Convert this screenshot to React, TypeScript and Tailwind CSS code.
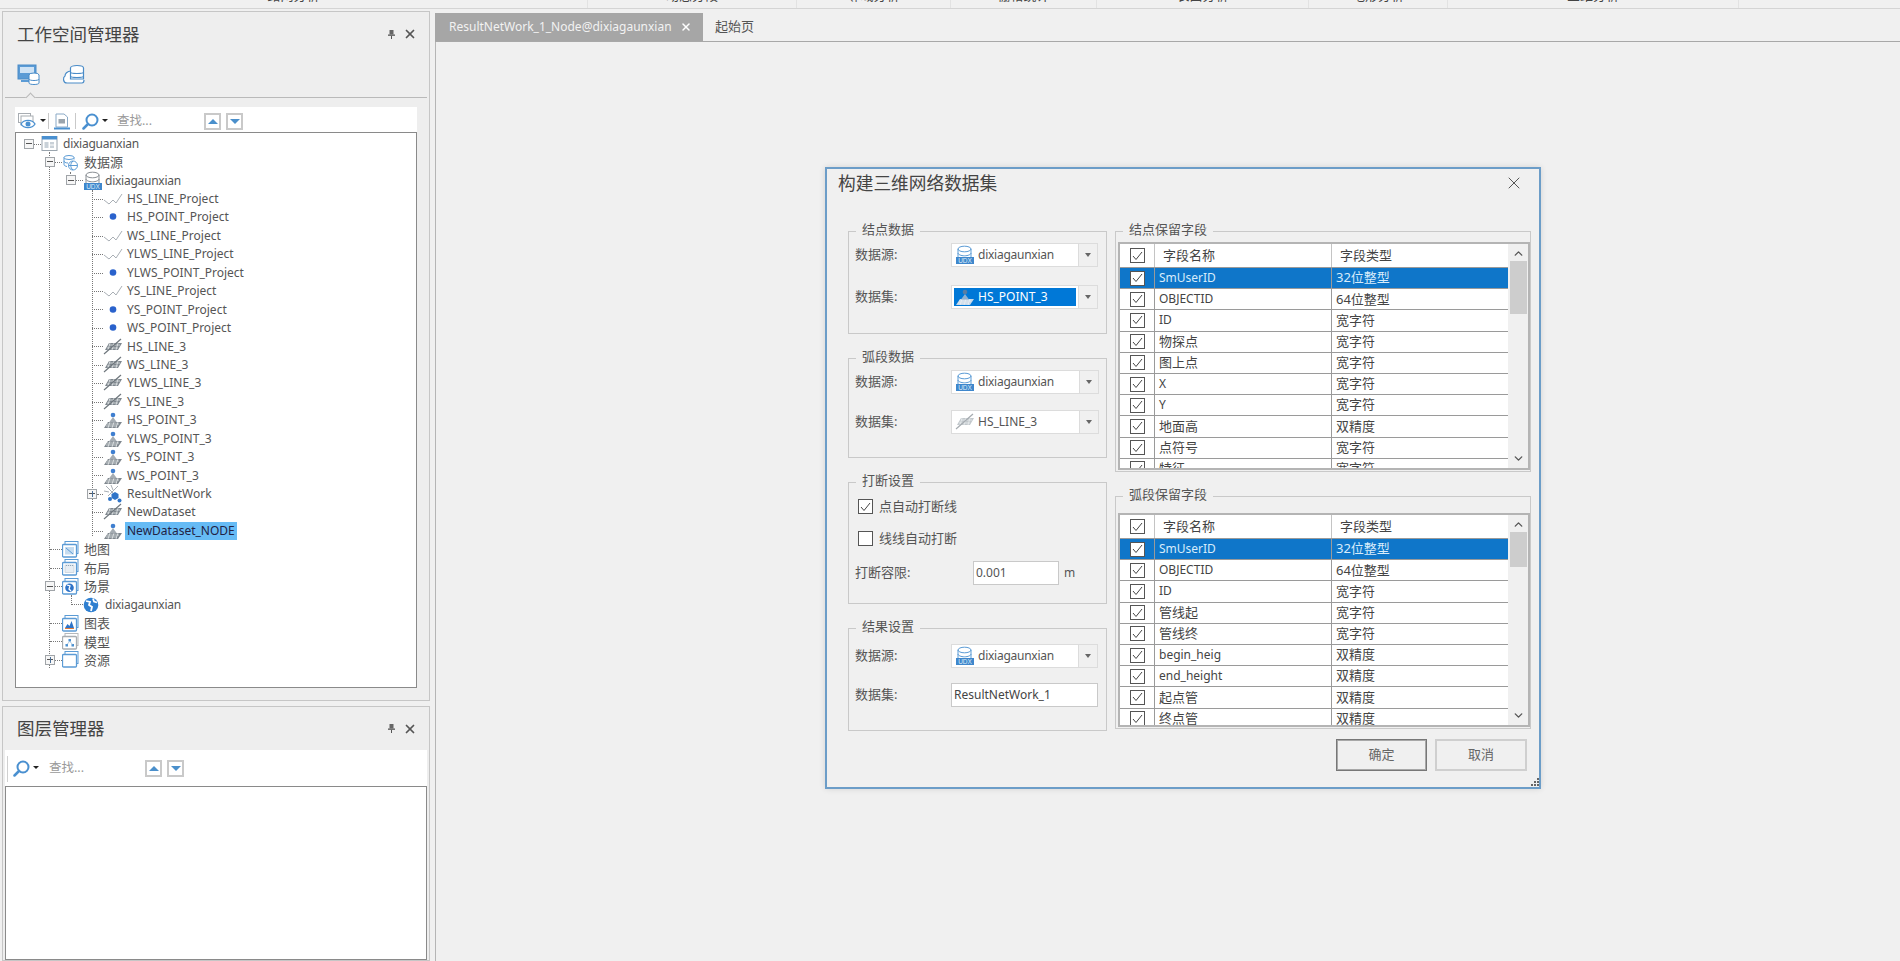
import { FC, ReactNode } from "react";
import { ChevronDown, ChevronUp, X } from "lucide-react";

const ribbonGroups = [
  { label: "路网分析", width: "w-[588px]" },
  { label: "动态分段", width: "w-[209px]" },
  { label: "邻域分析", width: "w-[154px]" },
  { label: "栅格统计", width: "w-[146px]" },
  { label: "表面分析", width: "w-[212px]" },
  { label: "地形分析", width: "w-[139px]" },
  { label: "三维分析", width: "w-[291px]" },
];

// latin labels run a little smaller than the cjk ones in this ui
const Txt: FC<{ children: string; className?: string }> = ({ children, className = "" }) => {
  const cjk = /[\u4e00-\u9fff]/.test(children);
  const size = cjk ? "text-[13px]" : children.startsWith("dixia") ? "text-[12px] tracking-[-0.25px]" : "text-[12px]";
  return <span className={`whitespace-nowrap ${size} ${className}`}>{children}</span>;
};

// ---- tree icons ----
const WorkspaceIcon = () => (
  <svg width="17" height="17" viewBox="0 0 17 17">
    <rect x="1" y="1.5" width="15" height="14" fill="#fff" stroke="#9aa4ad" />
    <rect x="1" y="1" width="15" height="3.5" fill="#4a90d0" />
    <rect x="3.5" y="7" width="4" height="6" fill="#c9d1d8" />
    <rect x="9" y="7" width="4" height="2.5" fill="#c9d1d8" />
    <rect x="9" y="10.5" width="4" height="2.5" fill="#c9d1d8" />
  </svg>
);

const SourcesIcon = () => (
  <svg width="17" height="17" viewBox="0 0 17 17" fill="none" stroke="#5b9bd5" strokeWidth="1">
    <ellipse cx="7" cy="3.5" rx="5" ry="2" />
    <path d="M2 3.5v7c0 1 1.5 1.8 3 2M12 3.5v2M2 7c0 1 1.5 2 4 2" />
    <circle cx="11" cy="11.5" r="4.5" fill="#fff" />
    <path d="M6.500 11.500h9M11 7c-3 2.500-3 6.500 0 9" />
  </svg>
);

const UdbIcon: FC<{ dim?: boolean }> = ({ dim }) => (
  <svg width="20" height="20" viewBox="0 0 20 20">
    <ellipse cx="9.500" cy="4" rx="6.500" ry="2.800" fill="#fff" stroke={dim ? "#5b9bd5" : "#8a8f94"} />
    <path d="M3 4v10M16 4v10M3 8c0 1.500 3 2.800 6.500 2.800S16 9.500 16 8" fill="#fff" stroke={dim ? "#5b9bd5" : "#8a8f94"} />
    <rect x="1" y="12" width="18" height="7" fill="#3f87cc" />
    <text x="10" y="18" textAnchor="middle" fontSize="6.500" fill="#dcecf9" fontFamily="Liberation Sans, sans-serif">
      UDX
    </text>
  </svg>
);

const LineIcon = () => (
  <svg width="20" height="14" viewBox="0 0 20 14" fill="none" stroke="#a9afb5" strokeWidth="1">
    <path d="M1 8l5 4 4-4 3 3 6-9" />
  </svg>
);

const PointIcon = () => (
  <svg width="20" height="14" viewBox="0 0 20 14">
    <circle cx="10" cy="6.500" r="3.300" fill="#2a62cc" />
  </svg>
);

const Line3dIcon: FC<{ dim?: boolean }> = ({ dim }) => (
  <svg width="20" height="20" viewBox="0 0 20 20" fill="none">
    <path d="M6 6h13l-4 7H2z" fill={dim ? "#c2c8cc" : "#7f878e"} />
    <path d="M6 8h11M4 11h11M7 6l-2 7M11 6l-2 7M15 6l-2 7" stroke="#eef0f2" strokeWidth="0.700" />
    <path d="M1 17L18 2" stroke={dim ? "#a5abb0" : "#6f777d"} strokeWidth="1.200" />
  </svg>
);

const Point3dIcon: FC<{ selected?: boolean }> = ({ selected }) => (
  <svg width="20" height="20" viewBox="0 0 20 20" fill="none">
    <path d="M5 12h14l-4 6H1z" fill={selected ? "#c7d8e8" : "#7f878e"} />
    <path d="M4 14h12M3 16h11M7 12l-2 6M11 12l-2 6M15 12l-2 6" stroke="#eef0f2" strokeWidth="0.700" />
    <path d="M10 7l-4 5.500h8z" fill={selected ? "#8fb0d0" : "#a5acb2"} />
    <circle cx="10" cy="5" r="2.300" fill={selected ? "#5a7ea3" : "#3f7fd0"} />
  </svg>
);

const NetworkIcon = () => (
  <svg width="20" height="20" viewBox="0 0 20 20" fill="none">
    <path d="M3 2l12 12M15 2L5 12M8 1l2 5M1 7l5 1" stroke="#a9afb5" />
    <path d="M12 8l3.500 2v4L12 16l-3.500-2v-4z" fill="#2f74c8" />
    <circle cx="7" cy="15" r="2" fill="#2f74c8" />
    <circle cx="16.500" cy="16.500" r="2" fill="#2f74c8" />
  </svg>
);

const FolderFrame: FC<{ children?: ReactNode; gray?: boolean }> = ({ children, gray }) => (
  <svg width="17" height="17" viewBox="0 0 17 17" fill="none">
    <rect x="3" y="0.500" width="13" height="12" fill="#fff" stroke={gray ? "#b5b8bb" : "#5b9bd5"} />
    <rect x="0.500" y="3.500" width="14" height="12.500" rx="1" fill="#fff" stroke={gray ? "#a9adb1" : "#5b9bd5"} strokeWidth="1.300" />
    {children}
  </svg>
);

const MapIcon = () => (
  <FolderFrame>
    <rect x="3" y="6" width="9" height="7.500" fill="#c5dcf0" />
    <path d="M4 7l7 6" stroke="#5b9bd5" />
  </FolderFrame>
);
const LayoutIcon = () => (
  <FolderFrame>
    <rect x="3" y="6" width="9" height="7.500" fill="#e6edf3" stroke="#b9c7d3" strokeWidth="0.600" />
    <path d="M4 6.500h7" stroke="#8fa5b8" strokeDasharray="1 1" />
  </FolderFrame>
);
const SceneIcon = () => (
  <FolderFrame>
    <circle cx="7.500" cy="9.700" r="4.300" fill="#2f74c8" />
    <path d="M5 7l3 1-1 3 2 2" stroke="#fff" strokeWidth="1.300" />
  </FolderFrame>
);
const ChartIcon = () => (
  <FolderFrame>
    <path d="M3 13l2.500-4 2 2 2-5 2.500 7z" fill="#2f74c8" />
    <path d="M3 13.500h9" stroke="#e07b39" />
  </FolderFrame>
);
const ModelIcon = () => (
  <FolderFrame gray>
    <rect x="6.500" y="6" width="2.500" height="2.500" fill="#4a90d0" />
    <rect x="3.500" y="11" width="2.500" height="2.500" fill="#4a90d0" />
    <rect x="9.500" y="11" width="2.500" height="2.500" fill="#4a90d0" />
    <path d="M7.500 8.500l-2.500 3M8 8.500l2.500 3" stroke="#8fb3d3" strokeWidth="0.700" />
  </FolderFrame>
);
const GlobeIcon = () => (
  <svg width="16" height="16" viewBox="0 0 16 16">
    <circle cx="8" cy="8" r="7.300" fill="#2f7fd0" />
    <path d="M3 4l4 1-1 3 3 2-1 4M10 1.500l1 3 3 1" fill="none" stroke="#fff" strokeWidth="1.800" />
  </svg>
);

// ---- toolbar icons ----
const Caret = () => <span className="inline-block border-x-[3px] border-t-[3px] border-x-transparent border-t-[#222]" />;

const EyeIcon = () => (
  <svg width="20" height="16" viewBox="0 0 20 16" fill="none">
    <rect x="0.500" y="0.500" width="12" height="9" fill="#fff" stroke="#a8adb2" />
    <rect x="3" y="3" width="12" height="9" fill="#fff" stroke="#a8adb2" />
    <path d="M3 11c3-4.800 11-4.800 14 0-3 4.800-11 4.800-14 0z" fill="#fff" stroke="#4a90d0" strokeWidth="1.400" />
    <circle cx="10" cy="11" r="2.500" fill="#4a90d0" />
  </svg>
);
const DocIcon = () => (
  <svg width="16" height="17" viewBox="0 0 16 17" fill="none">
    <path d="M2 1h8l3.500 3v10H2z" fill="#fff" stroke="#8aa9c6" />
    <rect x="4.500" y="6" width="6.500" height="4.500" fill="#9aa4ad" />
    <path d="M0 15.500h16" stroke="#4a90d0" strokeWidth="2" />
  </svg>
);
const FindIcon = () => (
  <svg width="17" height="17" viewBox="0 0 17 17" fill="none">
    <circle cx="10" cy="7" r="5.500" stroke="#4a90d0" strokeWidth="2" />
    <path d="M6 11l-4.500 4.500" stroke="#4a90d0" strokeWidth="2.500" strokeLinecap="round" />
  </svg>
);
const PinIcon = () => (
  <svg width="7" height="9" viewBox="0 0 7 9" className="mr-[8px]">
    <rect x="1.500" y="0" width="4" height="4.500" fill="#666" />
    <rect x="0" y="4.500" width="7" height="1.300" fill="#555" />
    <rect x="3" y="5.800" width="1" height="3.200" fill="#555" />
  </svg>
);
const ArrowBox: FC<{ up?: boolean }> = ({ up }) => (
  <span className="flex h-[17px] w-[17px] items-center justify-center border-2 border-[#c9c9c9] bg-white">
    <span
      className={
        up
          ? "border-x-[5px] border-b-[5px] border-x-transparent border-b-[#4a8fcb]"
          : "border-x-[5px] border-t-[5px] border-x-transparent border-t-[#4a8fcb]"
      }
    />
  </span>
);

const Expander: FC<{ open?: boolean; className: string }> = ({ open, className }) => (
  <span className={`absolute top-[4px] flex h-[10px] w-[10px] items-center justify-center border border-[#a0a4a8] bg-[#f6f6f6] ${className}`}>
    <span className="absolute h-px w-[6px] bg-[#555]" />
    {!open && <span className="absolute h-[6px] w-px bg-[#4a6f98]" />}
  </span>
);

const HDot: FC<{ className: string }> = ({ className }) => (
  <span className={`absolute top-[9px] h-px border-t border-dotted border-[#777] ${className}`} />
);

const rowIndent = {
  0: "ml-[25px] w-[22px]",
  1: "ml-[46px] w-[22px]",
  2: "ml-[67px] w-[22px]",
  3: "ml-[87px] w-[24px]",
};

type TreeItem = {
  label: string;
  depth: 0 | 1 | 2 | 3;
  icon: ReactNode;
  expander?: ReactNode;
  stub: string;
  selected?: boolean;
};

const leafStub = "left-[76px] w-[11px]";
const d1Stub = "left-[34px] w-[12px]";

const treeItems: TreeItem[] = [
  { label: "dixiaguanxian", depth: 0, icon: <WorkspaceIcon />, expander: <Expander open className="left-[8px]" />, stub: "left-[18px] w-[7px]" },
  { label: "数据源", depth: 1, icon: <SourcesIcon />, expander: <Expander open className="left-[29px]" />, stub: "left-[39px] w-[7px]" },
  { label: "dixiagaunxian", depth: 2, icon: <UdbIcon />, expander: <Expander open className="left-[50px]" />, stub: "left-[60px] w-[7px]" },
  { label: "HS_LINE_Project", depth: 3, icon: <LineIcon />, stub: leafStub },
  { label: "HS_POINT_Project", depth: 3, icon: <PointIcon />, stub: leafStub },
  { label: "WS_LINE_Project", depth: 3, icon: <LineIcon />, stub: leafStub },
  { label: "YLWS_LINE_Project", depth: 3, icon: <LineIcon />, stub: leafStub },
  { label: "YLWS_POINT_Project", depth: 3, icon: <PointIcon />, stub: leafStub },
  { label: "YS_LINE_Project", depth: 3, icon: <LineIcon />, stub: leafStub },
  { label: "YS_POINT_Project", depth: 3, icon: <PointIcon />, stub: leafStub },
  { label: "WS_POINT_Project", depth: 3, icon: <PointIcon />, stub: leafStub },
  { label: "HS_LINE_3", depth: 3, icon: <Line3dIcon />, stub: leafStub },
  { label: "WS_LINE_3", depth: 3, icon: <Line3dIcon />, stub: leafStub },
  { label: "YLWS_LINE_3", depth: 3, icon: <Line3dIcon />, stub: leafStub },
  { label: "YS_LINE_3", depth: 3, icon: <Line3dIcon />, stub: leafStub },
  { label: "HS_POINT_3", depth: 3, icon: <Point3dIcon />, stub: leafStub },
  { label: "YLWS_POINT_3", depth: 3, icon: <Point3dIcon />, stub: leafStub },
  { label: "YS_POINT_3", depth: 3, icon: <Point3dIcon />, stub: leafStub },
  { label: "WS_POINT_3", depth: 3, icon: <Point3dIcon />, stub: leafStub },
  { label: "ResultNetWork", depth: 3, icon: <NetworkIcon />, expander: <Expander className="left-[71px]" />, stub: "left-[81px] w-[6px]" },
  { label: "NewDataset", depth: 3, icon: <Line3dIcon />, stub: leafStub },
  { label: "NewDataset_NODE", depth: 3, icon: <Point3dIcon />, stub: leafStub, selected: true },
  { label: "地图", depth: 1, icon: <MapIcon />, stub: d1Stub },
  { label: "布局", depth: 1, icon: <LayoutIcon />, stub: d1Stub },
  { label: "场景", depth: 1, icon: <SceneIcon />, expander: <Expander open className="left-[29px]" />, stub: "left-[39px] w-[7px]" },
  { label: "dixiagaunxian", depth: 2, icon: <GlobeIcon />, stub: "left-[55px] w-[12px]" },
  { label: "图表", depth: 1, icon: <ChartIcon />, stub: d1Stub },
  { label: "模型", depth: 1, icon: <ModelIcon />, stub: d1Stub },
  { label: "资源", depth: 1, icon: <FolderFrame />, expander: <Expander className="left-[29px]" />, stub: "left-[39px] w-[7px]" },
];

const WorkspaceTree = () => (
  <div className="relative h-full overflow-hidden pt-[1.5px]">
    <span className="absolute left-[33px] top-[19px] h-[516px] border-l border-dotted border-[#777]" />
    <span className="absolute left-[54px] top-[39px] h-[6px] border-l border-dotted border-[#777]" />
    <span className="absolute left-[76px] top-[57px] h-[346px] border-l border-dotted border-[#777]" />
    <span className="absolute left-[55px] top-[462px] h-[10px] border-l border-dotted border-[#777]" />
    {treeItems.map((item, i) => (
      <div key={i} className="relative flex h-[18.45px] items-center">
        {item.expander}
        <HDot className={item.stub} />
        <span className={`flex shrink-0 items-center ${rowIndent[item.depth]}`}>{item.icon}</span>
        <Txt className={`leading-[18px] ${item.selected ? "-ml-[2px] bg-[#66bbf5] px-[2px] text-[#224]" : ""}`}>{item.label}</Txt>
      </div>
    ))}
  </div>
);

const PanelHeader: FC<{ title: string; className: string }> = ({ title, className }) => (
  <div className={`flex items-center pl-[14px] pr-[12px] ${className}`}>
    <span className="flex-1 text-[17.5px] text-[#444]">{title}</span>
    <PinIcon />
    <X size={14} strokeWidth={3} className="text-[#555]" />
  </div>
);

const SearchBits: FC<{ className: string }> = ({ className }) => (
  <>
    <FindIcon />
    <span className="ml-[3px] mt-[-2px] flex"><Caret /></span>
    <span className={`text-[12.5px] text-[#9a9a9a] ${className}`}>查找...</span>
  </>
);

const WorkspacePanel = () => (
  <section className="flex h-[690px] w-[428px] flex-col border border-[#c6c6c6] bg-[#eeeeee]">
    <PanelHeader title="工作空间管理器" className="h-[44px]" />
    <div className="relative mx-[2px] flex h-[42px] items-start gap-[22px] border-b border-[#b9b9b9] pl-[12px] pt-[8px]">
      <svg width="23" height="21" viewBox="0 0 23 21" fill="none">
        <rect x="1" y="1" width="18" height="14" fill="#5b9bd5" stroke="#4a8cc8" />
        <rect x="3" y="3" width="14" height="6" fill="#cfe3f5" />
        <path d="M4 17h12" stroke="#5b9bd5" strokeWidth="2" />
        <ellipse cx="17" cy="11" rx="5" ry="2" fill="#fff" stroke="#4a8cc8" />
        <path d="M12 11v8c0 2 10 2 10 0v-8M12 15c0 2 10 2 10 0" fill="#fff" stroke="#4a8cc8" />
      </svg>
      <svg width="23" height="21" viewBox="0 0 23 21" fill="none" stroke="#4a8cc8" strokeWidth="1.200">
        <path d="M9 7C5 7 3 10 3 12c-2 1-2.500 7 2 7h15c2 0 2-2 2-3" fill="#fff" />
        <ellipse cx="15" cy="4" rx="6.500" ry="2.500" fill="#fff" />
        <path d="M8.500 4v11h13V4M8.500 8c0 2 13 2 13 0M8.500 12c0 2 13 2 13 0" fill="#fff" />
      </svg>
      <span className="absolute -bottom-px left-[22px] h-[7px] w-[7px] translate-y-[3px] rotate-45 border-l border-t border-[#b9b9b9] bg-[#eeeeee]" />
    </div>
    <div className="flex flex-1 flex-col px-[12px] pb-[12px] pt-[9px]">
      <div className="flex h-[25px] items-center bg-white pl-[3px] pt-[3px]">
        <EyeIcon />
        <span className="ml-[2px] mt-[-2px] flex"><Caret /></span>
        <span className="ml-[2px] h-[16px] border-l border-[#c9c9c9]" />
        <span className="ml-[5px] flex"><DocIcon /></span>
        <span className="ml-[5px] mr-[6px] h-[16px] border-l border-[#c9c9c9]" />
        <SearchBits className="ml-[9px] w-[87px]" />
        <ArrowBox up />
        <span className="ml-[5px]"><ArrowBox /></span>
      </div>
      <div className="flex-1 border border-[#8a8a8a] bg-white">
        <WorkspaceTree />
      </div>
    </div>
  </section>
);

const LayerPanel = () => (
  <section className="mt-[5px] flex w-[428px] flex-1 flex-col border border-[#c6c6c6] bg-[#eeeeee]">
    <PanelHeader title="图层管理器" className="h-[43px]" />
    <div className="mx-[2px] flex h-[36px] items-center bg-white pl-[7px] pt-px">
      <span className="-ml-[5px] mr-[5px] h-[26px] border-l border-[#d0d0d0]" />
      <SearchBits className="ml-[10px] w-[96px]" />
      <ArrowBox up />
      <span className="ml-[5px]"><ArrowBox /></span>
    </div>
    <div className="mx-[2px] flex-1 border border-[#8a8a8a] bg-white" />
  </section>
);

// ---- dialog bits ----
const Group: FC<{ title: string; className: string; children: ReactNode }> = ({ title, className, children }) => (
  <div className={`relative border border-[#c9c9c9] ${className}`}>
    <span className="absolute -top-[13px] left-[7px] bg-[#f0f0f0] px-[6px] leading-[20px] text-[#555]">{title}</span>
    {children}
  </div>
);

const Combo: FC<{ icon: ReactNode; label: string; selected?: boolean; wide?: boolean }> = ({ icon, label, selected, wide }) => (
  <div className={`flex h-[24px] border border-[#dcdcdc] bg-white ${wide ? "w-[148px]" : "w-[147px]"}`}>
    <div className={`m-[2px] flex flex-1 items-center gap-[3px] pl-[1px] ${selected ? "bg-[#0078d7] text-white" : ""}`}>
      {icon}
      <Txt>{label}</Txt>
    </div>
    <div className="flex w-[19px] items-center justify-center border-l border-[#dcdcdc] bg-[#f0f0f0]">
      <span className="border-x-[3px] border-t-[4px] border-x-transparent border-t-[#666]" />
    </div>
  </div>
);

const FieldRow: FC<{ label: string; children: ReactNode; className?: string }> = ({ label, children, className = "" }) => (
  <div className={`flex items-center pl-[6px] ${className}`}>
    <span className="w-[96px] text-[#555]">{label}</span>
    {children}
  </div>
);

const Tick: FC<{ className?: string; on?: boolean }> = ({ className = "", on = true }) => (
  <span className={`flex h-[15px] w-[15px] shrink-0 items-center justify-center border border-[#555] bg-white ${className}`}>
    {on && (
      <svg width="11" height="10" viewBox="0 0 11 10" fill="none" stroke="#444" strokeWidth="1">
        <path d="M1 5l3 3.500L10 1" />
      </svg>
    )}
  </span>
);

const FieldTable: FC<{ rows: string[][]; thumb: string; className: string }> = ({ rows, thumb, className }) => {
  const cols = "grid grid-cols-[35px_177px_178px]";
  return (
    <div className={`flex overflow-hidden border-2 border-[#b4b4b4] bg-white ${className}`}>
      <div className="w-[390px] overflow-hidden">
        <div className={`${cols} h-[24px] border-b border-[#9a9a9a]`}>
          <span className="flex items-center justify-center border-r border-[#c4c4c4]"><Tick /></span>
          <span className="flex items-center border-r border-[#c4c4c4] pl-[8px] text-[#444]">字段名称</span>
          <span className="flex items-center pl-[8px] text-[#444]">字段类型</span>
        </div>
        {rows.map((row, i) => (
          <div
            key={i}
            className={`${cols} h-[21.2px] border-b border-[#9a9a9a] ${i === 0 ? "bg-[#0f76c9] text-[#d8ecfb]" : "text-[#444]"}`}
          >
            <span className="flex items-center justify-center border-r border-[#9a9a9a]"><Tick /></span>
            <span className="flex items-center border-r border-[#9a9a9a] pl-[4px]"><Txt>{row[0]}</Txt></span>
            <span className="flex items-center pl-[4px]"><Txt>{row[1]}</Txt></span>
          </div>
        ))}
      </div>
      <div className="flex w-[20px] flex-col items-center bg-[#f0f0f0] pt-[3px] text-[#555]">
        <ChevronUp size={13} strokeWidth={2.5} className="shrink-0" />
        <div className={`mt-[1px] w-[17px] shrink-0 bg-[#cdcdcd] ${thumb}`} />
        <div className="flex-1" />
        <ChevronDown size={13} strokeWidth={2.5} className="mb-[3px] shrink-0" />
      </div>
    </div>
  );
};

const nodeFields = [
  ["SmUserID", "32位整型"],
  ["OBJECTID", "64位整型"],
  ["ID", "宽字符"],
  ["物探点", "宽字符"],
  ["图上点", "宽字符"],
  ["X", "宽字符"],
  ["Y", "宽字符"],
  ["地面高", "双精度"],
  ["点符号", "宽字符"],
  ["特征", "宽字符"],
];

const arcFields = [
  ["SmUserID", "32位整型"],
  ["OBJECTID", "64位整型"],
  ["ID", "宽字符"],
  ["管线起", "宽字符"],
  ["管线终", "宽字符"],
  ["begin_heig", "双精度"],
  ["end_height", "双精度"],
  ["起点管", "双精度"],
  ["终点管", "双精度"],
];

const NetworkDialog = () => (
  <div className="absolute left-[825px] top-[167px] flex h-[622px] w-[716px] flex-col border-2 border-[#6c9dc8] bg-[#f0f0f0] shadow-[0_0_6px_rgba(0,0,0,0.12)]">
    <div className="flex h-[62px] items-start justify-between pl-[11px] pr-[15px] pt-[1px]">
      <span className="text-[17.7px] leading-[26px] text-[#444]">构建三维网络数据集</span>
      <X size={20} strokeWidth={1.2} className="mt-[3px] text-[#555]" />
    </div>
    <div className="flex gap-[8px] pl-[21px]">
      <div className="flex w-[259px] flex-col gap-[24px]">
        <Group title="结点数据" className="h-[103px] pt-[11px]">
          <FieldRow label="数据源:"><Combo icon={<UdbIcon dim />} label="dixiagaunxian" /></FieldRow>
          <FieldRow label="数据集:" className="mt-[18px]">
            <Combo icon={<span className="flex w-[20px] justify-center"><Point3dIcon selected /></span>} label="HS_POINT_3" selected />
          </FieldRow>
        </Group>
        <Group title="弧段数据" className="h-[100px] pt-[11px]">
          <FieldRow label="数据源:"><Combo icon={<UdbIcon dim />} label="dixiagaunxian" wide /></FieldRow>
          <FieldRow label="数据集:" className="mt-[16px]"><Combo icon={<Line3dIcon dim />} label="HS_LINE_3" wide /></FieldRow>
        </Group>
        <Group title="打断设置" className="h-[122px] pl-[9px] pt-[16px] text-[#555]">
          <label className="flex h-[15px] items-center gap-[6px]"><Tick />点自动打断线</label>
          <label className="mt-[17px] flex h-[15px] items-center gap-[6px]"><Tick on={false} />线线自动打断</label>
          <div className="-ml-[3px] mt-[15px] flex items-center">
            <span className="w-[118px]">打断容限:</span>
            <span className="flex h-[24px] w-[86px] items-center border border-[#c9c9c9] bg-white pl-[2px]"><Txt>0.001</Txt></span>
            <span className="ml-[5px]"><Txt>m</Txt></span>
          </div>
        </Group>
        <Group title="结果设置" className="h-[103px] pt-[15px]">
          <FieldRow label="数据源:"><Combo icon={<UdbIcon dim />} label="dixiagaunxian" /></FieldRow>
          <FieldRow label="数据集:" className="mt-[15px]">
            <span className="flex h-[24px] w-[147px] items-center border border-[#c9c9c9] bg-white pl-[2px] text-[#444]"><Txt>ResultNetWork_1</Txt></span>
          </FieldRow>
        </Group>
      </div>
      <div className="flex w-[416px] flex-col">
        <Group title="结点保留字段" className="h-[241px] pl-[2px] pt-[10px]">
          <FieldTable rows={nodeFields} thumb="h-[53px]" className="h-[228px] w-[412px]" />
        </Group>
        <Group title="弧段保留字段" className="mt-[24px] h-[233px] pl-[2px] pt-[16px]">
          <FieldTable rows={arcFields} thumb="h-[35px]" className="h-[214px] w-[412px]" />
        </Group>
        <div className="mt-[10px] flex justify-end gap-[8px] pr-[4px] text-[#666]">
          <button className="h-[32px] w-[91px] border border-[#777] shadow-[inset_0_0_0_1px_#a8a8a8]">确定</button>
          <button className="h-[32px] w-[92px] border-2 border-[#cfcfcf]">取消</button>
        </div>
      </div>
    </div>
    <svg width="9" height="9" viewBox="0 0 9 9" className="absolute bottom-0 right-0 text-[#666]" fill="currentColor">
      <rect x="7" y="0" width="2" height="2" />
      <rect x="4" y="3" width="2" height="2" />
      <rect x="7" y="3" width="2" height="2" />
      <rect x="1" y="6" width="2" height="2" />
      <rect x="4" y="6" width="2" height="2" />
      <rect x="7" y="6" width="2" height="2" />
    </svg>
  </div>
);

export default function App() {
  return (
    <div className="relative flex h-[961px] w-[1900px] flex-col overflow-hidden bg-[#f0f0f0] font-['Noto_Sans','Noto_Sans_CJK_SC',sans-serif] text-[13px] text-[#555]">
      <header className="flex h-[9px] shrink-0 overflow-hidden border-b border-[#d4d4d4]">
        {ribbonGroups.map((g) => (
          <div key={g.label} className={`${g.width} h-[8px] shrink-0 overflow-hidden border-r border-[#e2e2e2] text-center`}>
            <span className="-mt-[14px] block leading-[18px] text-[#444]">{g.label}</span>
          </div>
        ))}
      </header>
      <div className="flex min-h-0 flex-1">
        <aside className="flex w-[435px] shrink-0 flex-col pl-[2px] pt-[2px]">
          <WorkspacePanel />
          <LayerPanel />
        </aside>
        <main className="flex flex-1 flex-col pt-[4px]">
          <div className="flex h-[29px] items-stretch border-b border-[#a8a8a8]">
            <div className="flex w-[268px] items-center bg-[#a6a6a6] pl-[14px] text-[#f2f2f2]">
              <span className="flex-1"><Txt>ResultNetWork_1_Node@dixiagaunxian</Txt></span>
              <X size={12} strokeWidth={3} className="mr-[11px] text-white" />
            </div>
            <span className="ml-[12px] flex items-center text-[#555]">起始页</span>
          </div>
          <div className="flex-1 border-l border-[#b5b5b5]" />
        </main>
      </div>
      <NetworkDialog />
    </div>
  );
}
